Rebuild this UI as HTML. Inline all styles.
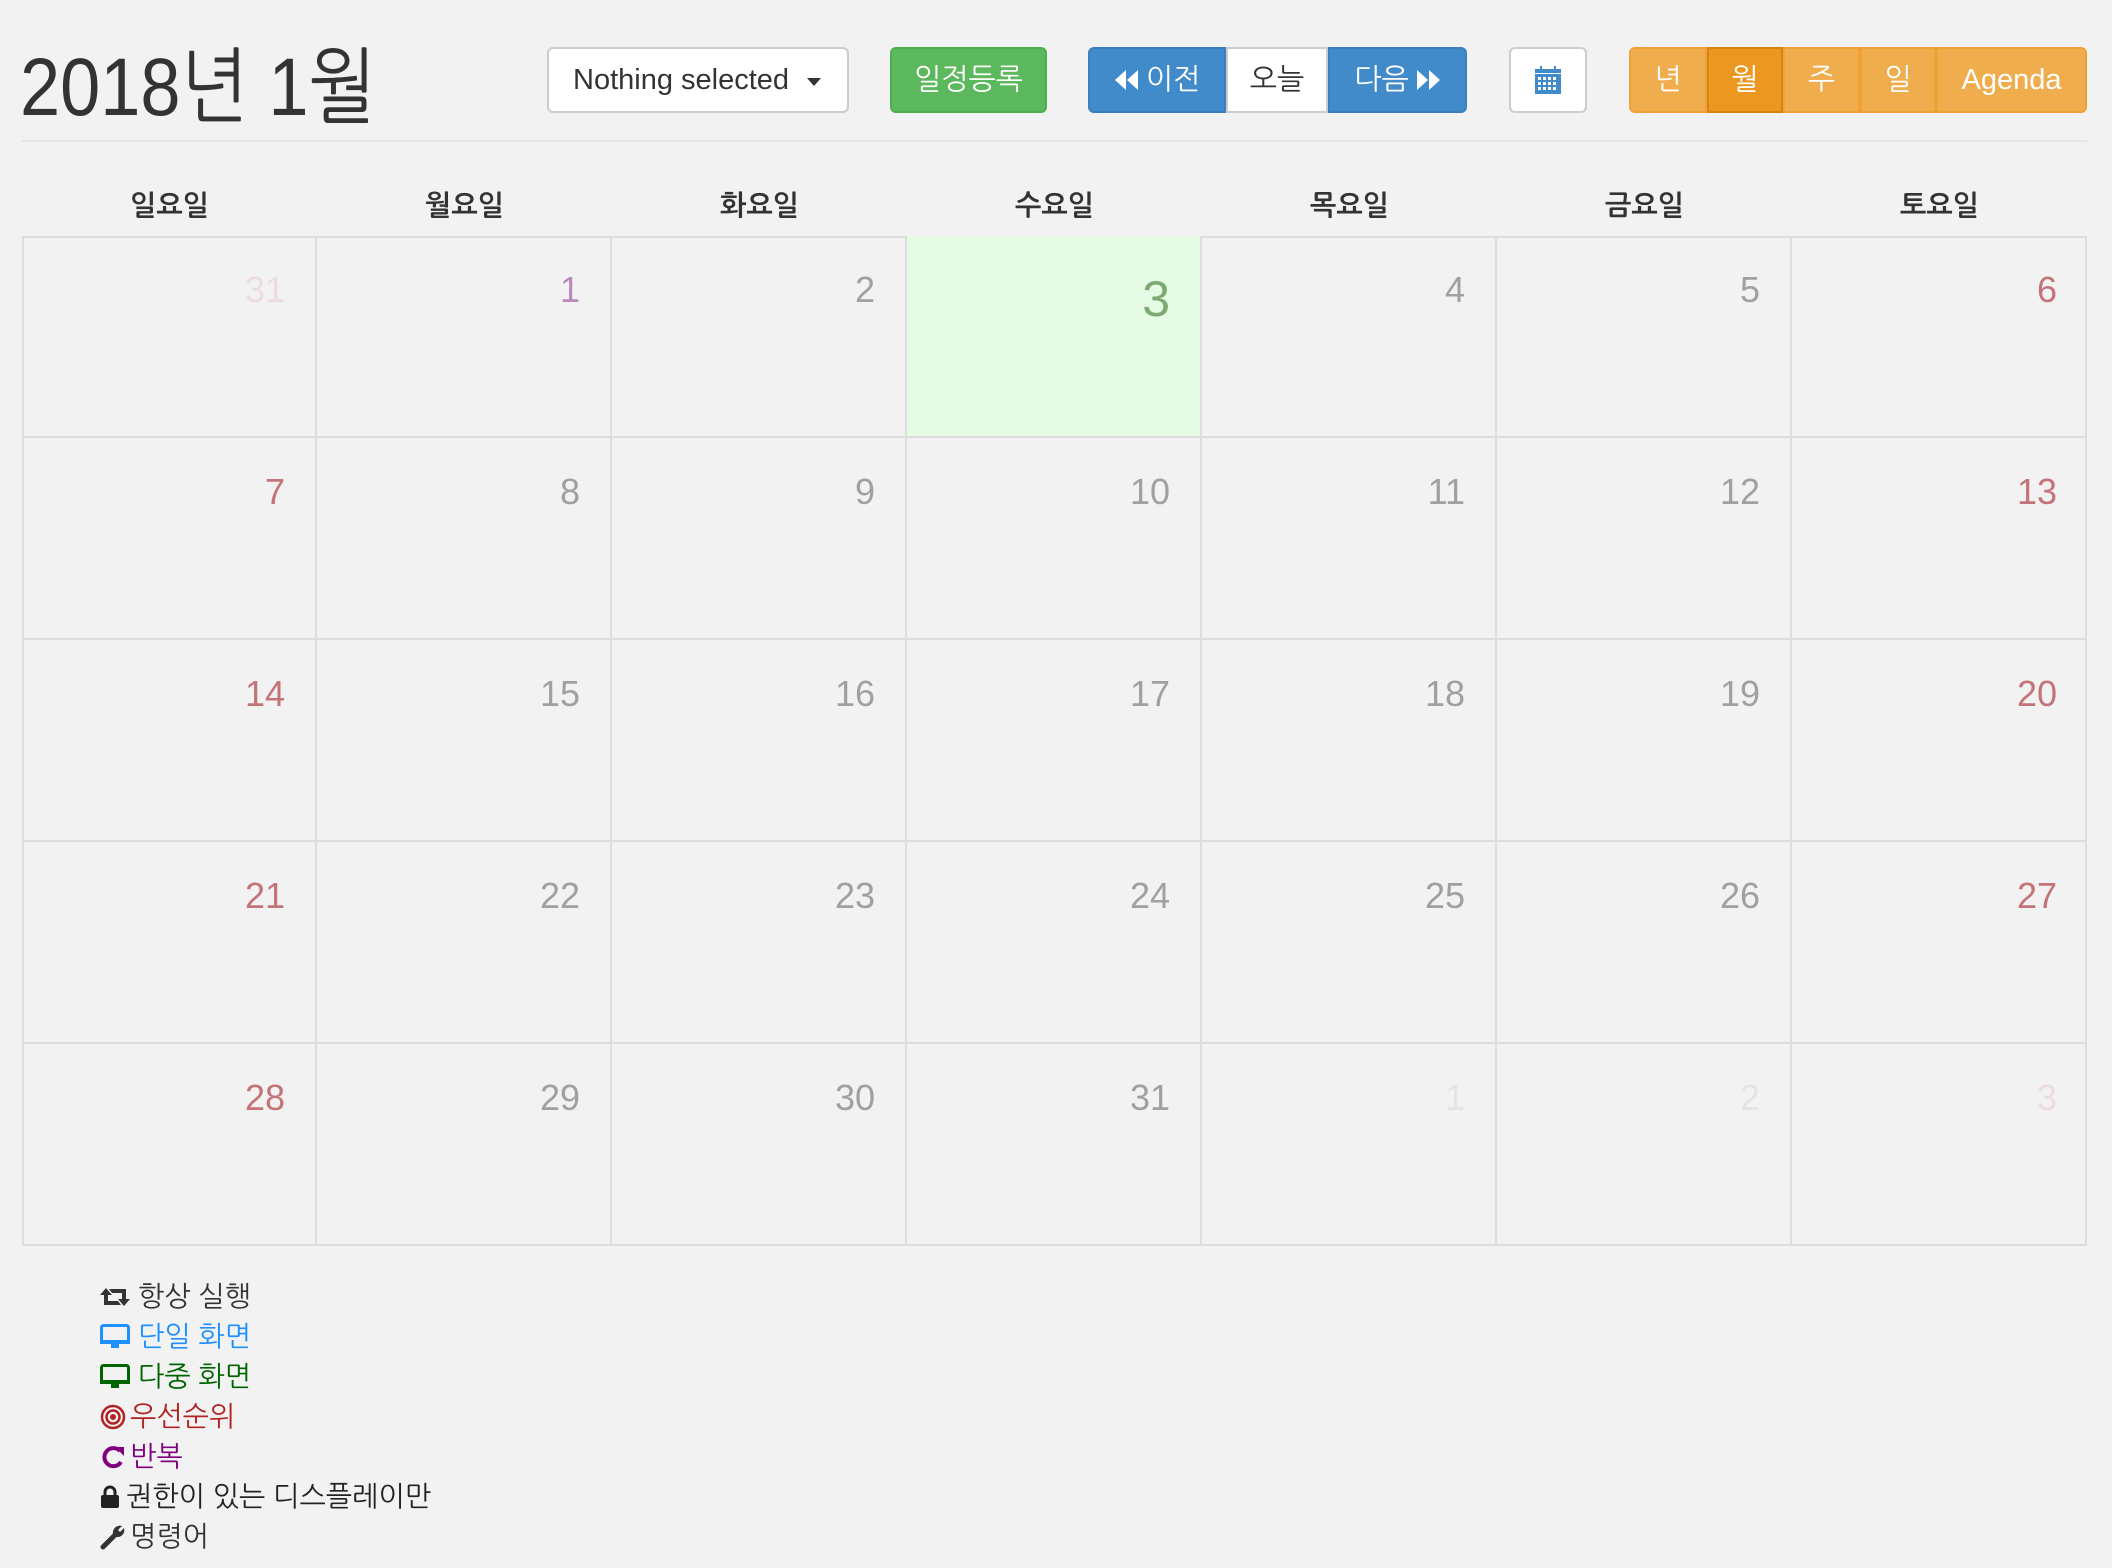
<!DOCTYPE html>
<html><head><meta charset="utf-8">
<style>
*{box-sizing:border-box;margin:0;padding:0}
body{width:2112px;height:1568px;background:#f2f2f2;font-family:"Liberation Sans","NanumGothic","Noto Sans CJK KR",sans-serif;color:#333;position:relative;overflow:hidden}
.abs{position:absolute}
.title{left:20px;top:38px;font-size:82px;font-weight:300;color:#333;line-height:100px;transform:scaleX(0.88);transform-origin:0 0}
.hr{left:22px;top:140px;width:2065px;height:2px;background:#e6e6e6}
.btn{position:absolute;top:47px;height:66px;display:flex;align-items:center;justify-content:center;font-size:29px}
.dd{left:547px;width:302px;background:#fff;border:2px solid #ccc;border-radius:6px;justify-content:flex-start;padding-left:24px;color:#333}
.dd .car{position:absolute;right:26px;top:29px;border-left:7px solid transparent;border-right:7px solid transparent;border-top:8px solid #333}
.green{left:890px;width:157px;background:#5cb85c;border:2px solid #4cae4c;border-radius:6px;color:#fff}
.blue{background:#428bca;color:#fff;border:2px solid #3a7fbf}
.orange{background:#f0ad4e;color:#fff;border:2px solid #eea236}
.grid{left:22px;top:236px;width:2065px;height:1010px;border:2px solid #ddd}
.cell{position:absolute;border-right:2px solid #ddd;border-bottom:2px solid #ddd;text-align:right;padding-right:30px;padding-top:33px;font-size:36px;color:#a0a0a0;font-weight:300}
.hd{position:absolute;top:190px;width:295px;text-align:center;font-size:28px;font-weight:bold;color:#333}
.leg{left:100px;font-size:28px;line-height:40px;display:flex;align-items:center}
.leg svg{margin-right:8px}
</style></head><body>
<div class="abs title">2018년 1월</div>
<div class="btn dd">Nothing selected<span class="car"></span></div>
<div class="btn green">일정등록</div>
<div class="btn blue" style="left:1088px;width:138px;border-radius:6px 0 0 6px">
<svg width="26" height="24" viewBox="0 0 26 24" style="margin-right:6px"><path d="M12 2 L1 12 L12 22Z M24 2 L13 12 L24 22Z" fill="#fff"/></svg>이전</div>
<div class="btn" style="left:1226px;width:102px;background:#fff;border:2px solid #ccc;color:#333">오늘</div>
<div class="btn blue" style="left:1328px;width:139px;border-radius:0 6px 6px 0">다음<svg width="26" height="24" viewBox="0 0 26 24" style="margin-left:6px"><path d="M2 2 L13 12 L2 22Z M14 2 L25 12 L14 22Z" fill="#fff"/></svg></div>
<div class="btn" style="left:1509px;width:78px;background:#fff;border:2px solid #ccc;border-radius:6px">
<svg width="26" height="28" viewBox="0 0 26 28"><rect x="5" y="0" width="2" height="5" fill="#428bca"/><rect x="19" y="0" width="2" height="5" fill="#428bca"/><rect x="0" y="3" width="26" height="4" fill="#428bca"/><rect x="0" y="8" width="26" height="20" fill="#428bca"/><g fill="#fff"><rect x="3" y="11" width="3" height="3"/><rect x="8" y="11" width="3" height="3"/><rect x="13" y="11" width="3" height="3"/><rect x="18" y="11" width="3" height="3"/><rect x="3" y="16" width="3" height="3"/><rect x="8" y="16" width="3" height="3"/><rect x="13" y="16" width="3" height="3"/><rect x="18" y="16" width="3" height="3"/><rect x="3" y="21" width="3" height="3"/><rect x="8" y="21" width="3" height="3"/><rect x="13" y="21" width="3" height="3"/><rect x="18" y="21" width="3" height="3"/></g></svg></div>
<div class="btn orange" style="left:1629px;width:78px;border-radius:6px 0 0 6px">년</div>
<div class="btn orange" style="left:1707px;width:76px;background:#ec971f;border-color:#d58512">월</div>
<div class="btn orange" style="left:1783px;width:77px">주</div>
<div class="btn orange" style="left:1860px;width:76px">일</div>
<div class="btn orange" style="left:1936px;width:151px;border-radius:0 6px 6px 0">Agenda</div>
<div class="abs hr"></div>

<div class="hd" style="left:22px">일요일</div>
<div class="hd" style="left:317px">월요일</div>
<div class="hd" style="left:612px">화요일</div>
<div class="hd" style="left:907px">수요일</div>
<div class="hd" style="left:1202px">목요일</div>
<div class="hd" style="left:1497px">금요일</div>
<div class="hd" style="left:1792px">토요일</div>

<div class="abs grid"></div>
<div id="cells"></div>
<script>
var d=[[31,1,2,3,4,5,6],[7,8,9,10,11,12,13],[14,15,16,17,18,19,20],[21,22,23,24,25,26,27],[28,29,30,31,1,2,3]];
var h='';var tops=[236,438,640,842,1044,1246];
for(var r=0;r<5;r++)for(var c=0;c<7;c++){
 var x=22+Math.round(c*295),w=(c==6?2087-x:295),y=tops[r],ht=tops[r+1]-y;
 var col='#a0a0a0',bg='transparent',fs=36,pt=33;
 if(c==0||c==6)col='#c47478';
 if((r==0&&c==0)||(r==4&&c>3))col=(c==0||c==6)?'#ecdcdc':'#e4e4e4';
 if(r==0&&c==1)col='#b98abc';
 if(r==0&&c==3){bg='#e6fbe4';col='#7daa72';fs=50;pt=34}
 h+='<div class="cell" style="left:'+x+'px;top:'+y+'px;width:'+w+'px;height:'+ht+'px;background:'+bg+';color:'+col+';font-size:'+fs+'px;padding-top:'+pt+'px;'+(c==6?'border-right:none;':'')+(r==4?'border-bottom:none;':'')+'">'+d[r][c]+'</div>';
}
document.getElementById('cells').innerHTML=h;
</script>

<div class="abs leg" style="top:1277px;color:#333"><svg width="30" height="22" viewBox="0 0 30 22"><path d="M6 2 L12 9 H8 V15 H18 L21 19 H4 V9 H0Z M24 20 L18 13 H22 V7 H12 L9 3 H26 V13 H30Z" fill="#333"/></svg>항상 실행</div>
<div class="abs leg" style="top:1317px;color:#1e90ff"><svg width="30" height="26" viewBox="0 0 30 26"><rect x="1.5" y="1.5" width="27" height="17" rx="2" fill="none" stroke="#1e90ff" stroke-width="3"/><rect x="0" y="16" width="30" height="4" fill="#1e90ff"/><rect x="11" y="20" width="8" height="4" fill="#1e90ff"/></svg>단일 화면</div>
<div class="abs leg" style="top:1357px;color:#006400"><svg width="30" height="26" viewBox="0 0 30 26"><rect x="1.5" y="1.5" width="27" height="17" rx="2" fill="none" stroke="#006400" stroke-width="3"/><rect x="0" y="16" width="30" height="4" fill="#006400"/><rect x="11" y="20" width="8" height="4" fill="#006400"/></svg>다중 화면</div>
<div class="abs leg" style="top:1397px;color:#b22222"><svg width="26" height="26" viewBox="0 0 26 26" style="margin-right:4px"><circle cx="13" cy="13" r="11" fill="none" stroke="#b22222" stroke-width="2.5"/><circle cx="13" cy="13" r="6.5" fill="none" stroke="#b22222" stroke-width="2.5"/><circle cx="13" cy="13" r="3" fill="#b22222"/></svg>우선순위</div>
<div class="abs leg" style="top:1437px;color:#800080"><svg width="26" height="26" viewBox="0 0 26 26" style="margin-right:4px"><path d="M20 7 A9 9 0 1 0 21 18" fill="none" stroke="#800080" stroke-width="4"/><path d="M15 3 H24 V12Z" fill="#800080"/></svg>반복</div>
<div class="abs leg" style="top:1477px;color:#222"><svg width="20" height="24" viewBox="0 0 20 24" style="margin-right:6px"><path d="M5 11 V7 A5 5 0 0 1 15 7 V11" fill="none" stroke="#222" stroke-width="3"/><rect x="1" y="10" width="18" height="13" rx="2" fill="#222"/></svg>권한이 있는 디스플레이만</div>
<div class="abs leg" style="top:1517px;color:#333"><svg width="26" height="26" viewBox="0 0 26 26" style="margin-right:4px"><path d="M3 23 L14 12" stroke="#333" stroke-width="5" stroke-linecap="round"/><path d="M13 10 A7 7 0 0 1 22 2 L18 6 L20 8 L24 4 A7 7 0 0 1 16 13Z" fill="#333"/></svg>명령어</div>
</body></html>
